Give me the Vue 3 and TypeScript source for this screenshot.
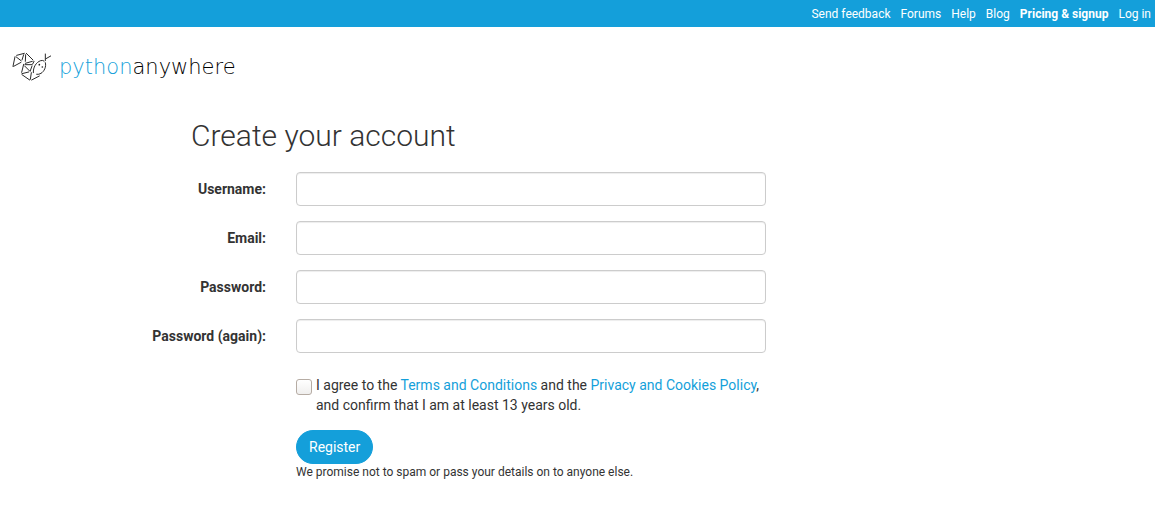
<script setup lang="ts">
import { reactive } from 'vue'

interface NavLink {
  label: string
  strong?: boolean
}

interface Field {
  id: 'username' | 'email' | 'password' | 'password2'
  label: string
  type: string
}

const links: NavLink[] = [
  { label: 'Send feedback' },
  { label: 'Forums' },
  { label: 'Help' },
  { label: 'Blog' },
  { label: 'Pricing & signup', strong: true },
  { label: 'Log in' },
]

const fields: Field[] = [
  { id: 'username', label: 'Username:', type: 'text' },
  { id: 'email', label: 'Email:', type: 'email' },
  { id: 'password', label: 'Password:', type: 'password' },
  { id: 'password2', label: 'Password (again):', type: 'password' },
]

const form = reactive({ username: '', email: '', password: '', password2: '', agreed: false })
</script>

<template>
  <div class="page">
    <nav class="topbar">
      <a v-for="link in links" :key="link.label" href="#" :class="{ strong: link.strong }">{{ link.label }}</a>
    </nav>

    <header>
      <a class="logo" href="#">
        <svg viewBox="0 0 120 90" width="40" height="30" aria-hidden="true">
          <g fill="none" stroke="#1a1a1a" stroke-width="2.8" stroke-linecap="round" stroke-linejoin="round">
            <path d="M3 43 L9 14 M14 10 L37 4 M5 43 L27 31 M13 15 L27 26 M35 8 L30 24" />
            <path d="M43 4 L63 24 M41 8 L40 28 M61 28 L40 34" />
            <path d="M35 37 L29 61 M39 38 L60 38 M66 28 L62 36 M38 42 L54 58 M60 42 L55 56" />
            <path d="M30 65 L50 60 M30 68 L53 84 M58 62 L55 82" />
            <path d="M59 84 L82 72" />
            <path d="M64 62 C63 46 72 31 86 26 Q92 24 96 27 M100 32 C104 44 96 59 87 64 Q81 68 74 67" />
            <path d="M100 6 L100 26 M102 20 L116 12" />
          </g>
          <g fill="#1a1a1a">
            <circle cx="82" cy="38" r="2.5" />
            <circle cx="91" cy="45" r="2.5" />
          </g>
        </svg>
        <span class="wordmark"><span class="blue">python</span>anywhere</span>
      </a>
    </header>

    <main>
      <h1>Create your account</h1>
      <form @submit.prevent>
        <template v-for="field in fields" :key="field.id">
          <label class="name" :for="field.id">{{ field.label }}</label>
          <input :id="field.id" v-model="form[field.id]" class="control" :type="field.type" />
        </template>
        <div class="actions">
          <div class="terms">
            <input id="agree" v-model="form.agreed" type="checkbox" />
            <label for="agree">I agree to the <a href="#">Terms and Conditions</a> and the <a href="#">Privacy and Cookies Policy</a>, and confirm that I am at least 13 years old.</label>
          </div>
          <button type="submit">Register</button>
          <p class="note">We promise not to spam or pass your details on to anyone else.</p>
        </div>
      </form>
    </main>
  </div>
</template>

<style>
body {
  margin: 0;
  background: #fff;
}
</style>

<style scoped>
.page {
  font: 14px/20px Roboto, "Liberation Sans", sans-serif;
  color: #333;
}
a {
  color: #149fda;
  text-decoration: none;
}
.topbar {
  display: flex;
  justify-content: flex-end;
  gap: 10px;
  padding: 6px 4px 4px 10px;
  background: #149fda;
  font-size: 12px;
  line-height: 17px;
}
.topbar a {
  color: #fff;
}
.topbar .strong {
  font-weight: 700;
}
header {
  display: flex;
  padding: 25px 12px 0;
}
.logo {
  display: flex;
  align-items: center;
  gap: 7px;
  color: #000;
}
.wordmark {
  font: 200 21px/30px "DejaVu Sans", sans-serif;
}
.blue {
  color: #149fda;
}
main {
  padding: 37px 16px 40px 151px;
}
h1 {
  margin: 0 0 20px 40px;
  font-size: 30px;
  font-weight: 300;
  line-height: 33px;
}
form {
  display: grid;
  grid-template-columns: 115px minmax(0, 470px);
  column-gap: 30px;
  row-gap: 15px;
}
.name {
  font-weight: 700;
  padding-top: 7px;
  text-align: right;
  white-space: nowrap;
}
.control {
  box-sizing: border-box;
  width: 100%;
  height: 34px;
  padding: 6px 12px;
  border: 1px solid #ccc;
  border-radius: 4px;
  box-shadow: inset 0 1px 1px rgba(0, 0, 0, 0.075);
  background: #fff;
  font: inherit;
  color: #555;
}
.actions {
  grid-column: 2;
  padding-top: 7px;
}
.terms {
  display: flex;
  align-items: flex-start;
  gap: 4px;
  margin-bottom: 15px;
}
.terms input {
  appearance: none;
  box-sizing: border-box;
  flex: none;
  width: 16px;
  height: 16px;
  margin: 4px 0 0;
  border: 1px solid #b6aca4;
  border-radius: 3px;
  background: linear-gradient(#fff, #f0efee);
}
.terms input:checked {
  background: #149fda;
}
button {
  display: block;
  height: 34px;
  padding: 6px 12px;
  border: 1px solid #149fda;
  border-radius: 17px;
  background: #149fda;
  color: #fff;
  font: inherit;
}
.note {
  margin: 0;
  font-size: 12px;
  line-height: 17px;
}
</style>
